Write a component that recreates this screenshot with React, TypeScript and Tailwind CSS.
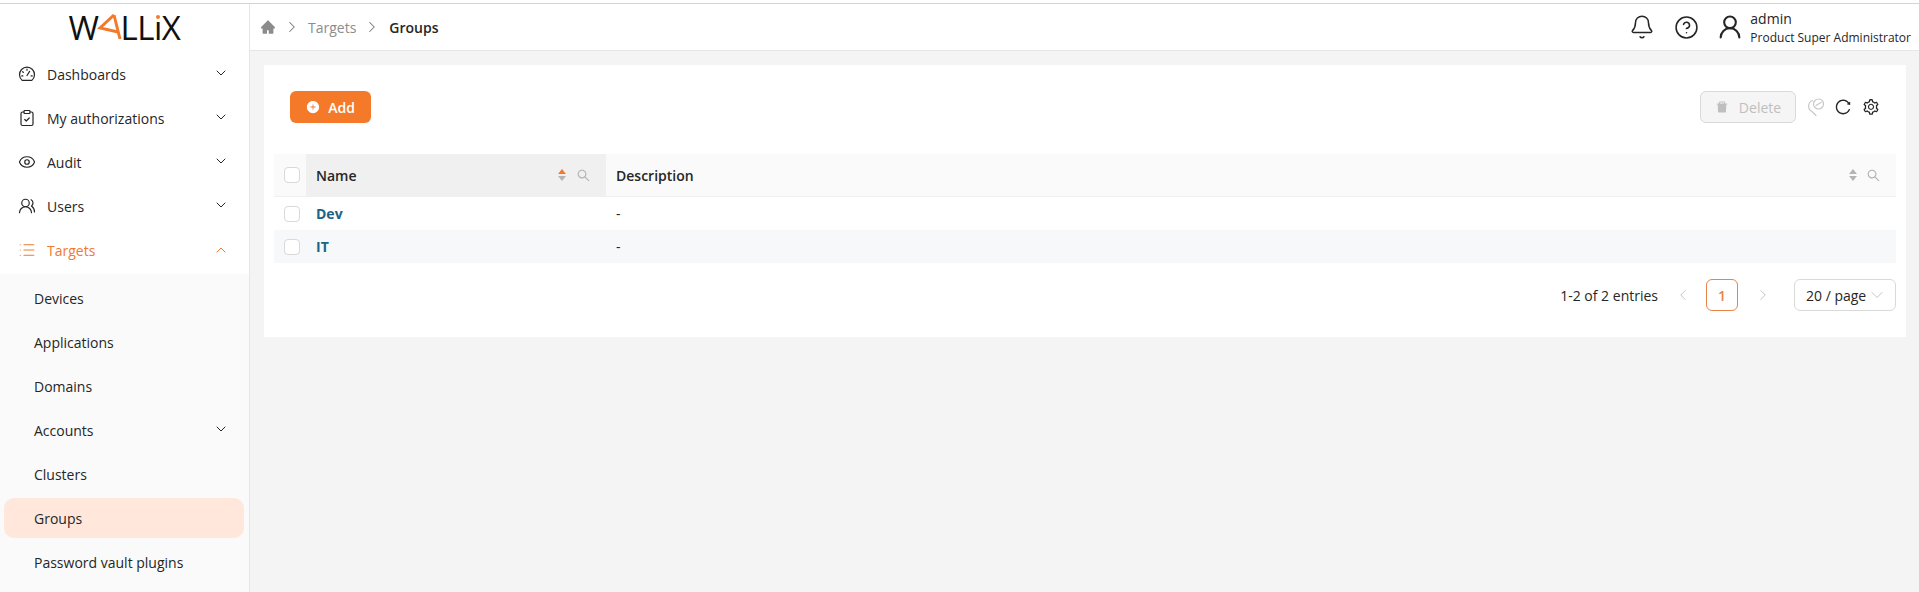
import { AiFillDelete, AiFillHome, AiFillPlusCircle, AiOutlineReload, AiOutlineSearch, AiOutlineSetting } from "react-icons/ai";
import { Bell, ChevronDown, ChevronLeft, ChevronRight, ChevronUp, CircleHelp, ClipboardCheck, Eye, List, UserRound, UsersRound } from "lucide-react";

function DashboardIcon({ className }: { className?: string; strokeWidth?: number }) {
  return (
    <svg viewBox="0 0 24 24" className={className} fill="none" stroke="currentColor" strokeWidth="1.6" strokeLinecap="round" strokeLinejoin="round">
      <path d="M5.5 20.5A10 10 0 1 1 18.5 20.5Z" />
      <path d="M12 14 15.5 8.5M12 5.5V7M6 9l1.2.8M5 14.5h1.5M17.5 14.5H19" />
    </svg>
  );
}

function ColumnsSearchIcon({ className }: { className?: string }) {
  return (
    <svg viewBox="0 0 20 20" className={className} fill="none" stroke="currentColor" strokeWidth="1.2" strokeLinecap="round">
      <path d="M6.5 3.5A6 6 0 0 0 6 14.5L10 18.5" />
      <circle cx="12.5" cy="7" r="5" />
      <path d="M10 8.5 15 5.5" />
    </svg>
  );
}

const MAIN_MENU = [
  { label: "Dashboards", icon: DashboardIcon },
  { label: "My authorizations", icon: ClipboardCheck },
  { label: "Audit", icon: Eye },
  { label: "Users", icon: UsersRound },
];

const SUB_MENU = ["Devices", "Applications", "Domains", "Accounts", "Clusters", "Groups", "Password vault plugins"];

const ROWS = [
  { name: "Dev", striped: false },
  { name: "IT", striped: true },
];

function Logo() {
  return (
    <div className="flex h-[46px] items-center justify-center font-['Open_Sans',sans-serif] text-[33px] leading-none text-[#111]">
      <span className="flex items-center tracking-[-0.5px]">
        W
        <svg viewBox="0 0 26 26" className="mx-[-2px] h-[26px] w-[26px]" fill="none" stroke="#f47a2a" strokeWidth="3">
          <path d="M17 1 L3 14 L21 18" />
          <path d="M17 1 L23 25" />
        </svg>
        LL
        <span className="relative">
          ı
          <span className="absolute left-[2px] top-[4px] h-1 w-1 rounded-full bg-[#f47a2a]" />
        </span>
        X
      </span>
    </div>
  );
}

function Caret({ active }: { active?: boolean }) {
  return (
    <div className="flex flex-col gap-[2px]">
      <div className={`h-0 w-0 border-x-[4px] border-b-[5px] border-x-transparent ${active ? "border-b-[#f47a2a]" : "border-b-[#b4b4b4]"}`} />
      <div className="h-0 w-0 border-x-[4px] border-t-[5px] border-x-transparent border-t-[#b4b4b4]" />
    </div>
  );
}

function Checkbox() {
  return <div className="h-4 w-4 rounded-[4px] border border-[#d9d9d9] bg-white" />;
}

export default function App() {
  return (
    <div className="h-[592px] w-[1919px] overflow-hidden bg-[#f4f4f4] font-['Open_Sans',sans-serif] text-[14px] text-[#262626]">
      <div className="h-1 border-b border-[#d4d4d8] bg-white" />
      <div className="flex h-[588px]">
        <aside className="w-[250px] shrink-0 border-r border-[#e6e6e6] bg-white">
          <Logo />
          <nav className="pb-[2px] pt-[2px]">
            {MAIN_MENU.map(({ label, icon: Icon }) => (
              <div key={label} className="flex h-11 items-center pl-[18px] pr-5">
                <Icon className="mr-[11px] h-[18px] w-[18px]" strokeWidth={1.6} />
                <span className="flex-1">{label}</span>
                <ChevronDown className="mb-0.5 h-4 w-4" strokeWidth={1.5} />
              </div>
            ))}
            <div className="flex h-11 items-center pl-[18px] pr-5 text-[#f07a32]">
              <List className="mr-[11px] h-[18px] w-[18px]" strokeWidth={1.6} />
              <span className="flex-1">Targets</span>
              <ChevronUp className="h-4 w-4" strokeWidth={1.5} />
            </div>
          </nav>
          <div className="h-[400px] bg-[#fafafa] px-1 pt-[2px]">
            {SUB_MENU.map((item) => (
              <div key={item} className="flex h-11 items-center">
                <div className={`flex h-10 w-60 items-center rounded-[10px] pl-[30px] pr-[15px] ${item === "Groups" ? "bg-[#ffe8db]" : ""}`}>
                  <span className="flex-1">{item}</span>
                  {item === "Accounts" && <ChevronDown className="mb-0.5 h-4 w-4" strokeWidth={1.5} />}
                </div>
              </div>
            ))}
          </div>
        </aside>

        <main className="flex-1">
          <header className="flex h-[47px] items-center border-b border-[#e6e6e6] bg-white pl-[10px] pr-2">
            <AiFillHome className="h-4 w-4 text-[#8c8c8c]" />
            <ChevronRight className="ml-[7px] h-[18px] w-[18px] text-[#777]" strokeWidth={1.4} />
            <span className="ml-[7px] text-[#8c8c8c]">Targets</span>
            <ChevronRight className="ml-[7px] h-[18px] w-[18px] text-[#777]" strokeWidth={1.4} />
            <span className="ml-2 font-semibold">Groups</span>
            <div className="ml-auto flex items-center">
              <Bell className="h-[26px] w-[26px]" strokeWidth={1.4} />
              <CircleHelp className="ml-[19px] h-[25px] w-[25px]" strokeWidth={1.5} />
              <UserRound className="ml-[17px] h-7 w-7" strokeWidth={1.8} />
              <div className="ml-[6px] flex flex-col">
                <span className="text-[14px] leading-[19px]">admin</span>
                <span className="mt-[2px] text-[12px] leading-4">Product Super Administrator</span>
              </div>
            </div>
          </header>

          <section className="ml-[14px] mr-[13px] mt-[14px] h-[272px] bg-white px-[10px]">
            <div className="flex h-[89px] items-start pt-[26px]">
              <button className="ml-4 flex h-8 w-[81px] items-center justify-center gap-2 rounded-md bg-[#f47a2a] font-semibold text-white">
                <AiFillPlusCircle className="h-[14px] w-[14px]" />
                Add
              </button>
              <div className="ml-auto flex items-center pr-4">
                <button className="flex h-8 w-24 items-center justify-center gap-[10px] rounded-md border border-[#d9d9d9] bg-[#f5f5f5] text-[#bfbfbf]">
                  <AiFillDelete className="h-[14px] w-[14px]" />
                  Delete
                </button>
                <ColumnsSearchIcon className="ml-[10px] h-5 w-5 text-[#c8c8c8]" />
                <AiOutlineReload className="ml-2 h-[18px] w-[18px]" />
                <AiOutlineSetting className="ml-[10px] h-[18px] w-[18px]" />
              </div>
            </div>

            <div className="flex h-[43px] border-b border-[#f0f0f0] bg-[#fafafa] font-semibold">
              <div className="flex w-8 items-center justify-center pl-[3px]">
                <Checkbox />
              </div>
              <div className="flex w-[300px] items-center bg-[#f0f0f0] pl-[10px] pr-[15px]">
                <span className="flex-1">Name</span>
                <Caret active />
                <AiOutlineSearch className="ml-[10px] h-[15px] w-[15px] text-[#b4b4b4]" />
              </div>
              <div className="flex flex-1 items-center pl-[10px] pr-[15px]">
                <span className="flex-1">Description</span>
                <Caret />
                <AiOutlineSearch className="ml-[9px] h-[15px] w-[15px] text-[#b4b4b4]" />
              </div>
            </div>
            {ROWS.map((row) => (
              <div key={row.name} className={`flex h-[33px] items-center ${row.striped ? "bg-[#f7f8fa]" : ""}`}>
                <div className="flex w-8 justify-center pl-[3px]">
                  <Checkbox />
                </div>
                <span className="w-[300px] pl-[10px] font-bold text-[#1a6488]">{row.name}</span>
                <span className="pl-[10px]">-</span>
              </div>
            ))}

            <div className="mt-4 flex h-8 items-center justify-end">
              <span>1-2 of 2 entries</span>
              <ChevronLeft className="ml-4 h-[18px] w-[18px] text-[#c4c4c4]" strokeWidth={1.3} />
              <div className="ml-[14px] flex h-8 w-8 items-center justify-center rounded-md border border-[#e8834a] font-semibold text-[#e8834a]">1</div>
              <ChevronRight className="ml-4 h-[18px] w-[18px] text-[#c4c4c4]" strokeWidth={1.3} />
              <div className="ml-[22px] flex h-8 w-[102px] items-center rounded-md border border-[#d9d9d9] pl-[11px] pr-2">
                <span className="flex-1">20 / page</span>
                <ChevronDown className="h-5 w-5 text-[#c4c4c4]" strokeWidth={1.2} />
              </div>
            </div>
          </section>
        </main>
      </div>
    </div>
  );
}
